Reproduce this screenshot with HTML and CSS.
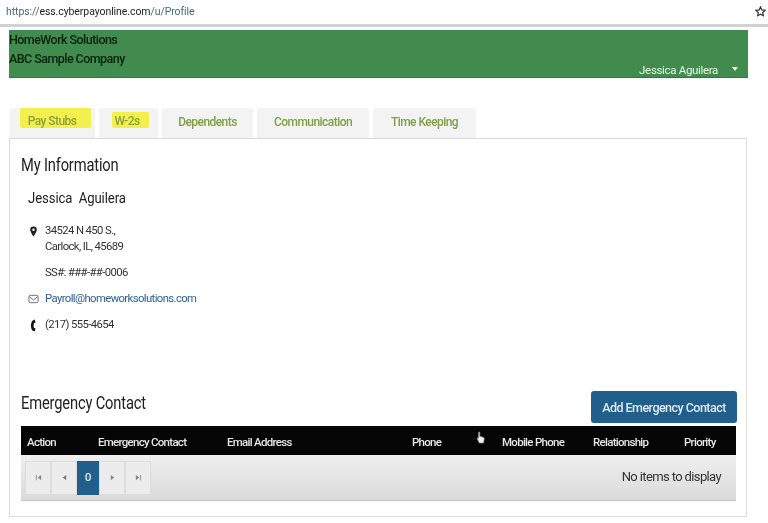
FILE: index.html
```html
<!DOCTYPE html>
<html lang="en">
<head>
<meta charset="utf-8">
<title>Profile</title>
<link rel="stylesheet" href="styles.css">
</head>
<body>
<div class="page">
  <div class="urlbar">
    <span class="url">https://<b>ess.cyberpayonline.com</b>/u/Profile</span>
    <svg class="star" viewBox="0 0 12 12" width="11" height="11"><path d="M6 1l1.500 3.300 3.500.4-2.600 2.400.7 3.500L6 8.900l-3.100 1.700.7-3.500L1 4.700l3.500-.4z" fill="none" stroke="#333" stroke-width="1.300"/></svg>
  </div>
  <header class="banner">
    <div class="org">HomeWork Solutions<br>ABC Sample Company</div>
    <div class="user">Jessica Aguilera<span class="caret"></span></div>
  </header>
  <nav class="tabs">
    <a class="tab tab-1"><mark>Pay Stubs</mark></a>
    <a class="tab tab-2"><mark>W-2s</mark></a>
    <a class="tab tab-3">Dependents</a>
    <a class="tab tab-4">Communication</a>
    <a class="tab tab-5">Time Keeping</a>
  </nav>
  <main class="panel">
    <h2 class="title">My Information</h2>
    <div class="name">Jessica&nbsp; Aguilera</div>
    <div class="row addr">
      <svg class="ico" viewBox="0 0 10 12" width="9" height="11"><path fill-rule="evenodd" d="M5 0.500a3.600 3.600 0 0 1 3.600 3.600C8.600 6.500 5 11.500 5 11.500S1.400 6.500 1.400 4.100A3.600 3.600 0 0 1 5 0.500zM5 2.800a1.300 1.300 0 1 0 0 2.600 1.300 1.300 0 0 0 0-2.600z" fill="#222"/></svg>
      <span>34524 N 450 S.,<br>Carlock, IL, 45689</span>
    </div>
    <div class="row ss"><span>SS#: ###-##-0006</span></div>
    <div class="row mail">
      <svg class="ico" viewBox="0 0 12 10" width="11" height="10"><rect x="1" y="1" width="10" height="8" rx="1.500" fill="none" stroke="#667" stroke-width="1"/><path d="M1.500 2.500L6 6l4.500-3.500" fill="none" stroke="#667" stroke-width="1"/></svg>
      <a class="link">Payroll@homeworksolutions.com</a>
    </div>
    <div class="row phone">
      <svg class="ico ico-phone" viewBox="0 0 8 12" width="8" height="13"><path d="M5 0.500L3 1.500C1.200 3.500 1.200 8.500 3 10.500L5 11.500L6 8.800L4.500 8.200C4 7 4 5 4.500 3.800L6 3.200z" fill="#111"/></svg>
      <span>(217) 555-4654</span>
    </div>
    <div class="section-head">
      <h2 class="title">Emergency Contact</h2>
      <button class="add">Add Emergency Contact</button>
    </div>
    <div class="grid-head">
      <span>Action</span><span>Emergency Contact</span><span>Email Address</span><span>Phone</span><span>Mobile Phone</span><span>Relationship</span><span>Priority</span>
    </div>
    <div class="pager">
      <div class="pages">
        <span class="pg"><svg viewBox="0 0 8 8" width="7" height="7"><path d="M1 1h1v6H1zM7 1v6L3 4z" fill="#888"/></svg></span>
        <span class="pg"><svg viewBox="0 0 8 8" width="7" height="7"><path d="M6 1v6L2 4z" fill="#777"/></svg></span>
        <span class="pg current">0</span>
        <span class="pg"><svg viewBox="0 0 8 8" width="7" height="7"><path d="M2 1v6l4-3z" fill="#888"/></svg></span>
        <span class="pg"><svg viewBox="0 0 8 8" width="7" height="7"><path d="M1 1v6l4-3zM6 1h1v6H6z" fill="#888"/></svg></span>
      </div>
      <span class="empty">No items to display</span>
    </div>
  </main>
  <svg class="cursor" viewBox="0 0 12 16" width="10" height="14"><path d="M3 1.500c0-1 1.500-1 1.500 0V6l4 1.200c1.500.5 1.500 1.500 1.200 3L9 14H4L1.500 9C1 8 2 7.500 3 8.500z" fill="#f4f4f4" stroke="#8a8a8a" stroke-width="1"/></svg>
</div>
</body>
</html>
```
FILE: styles.css
```css
* { box-sizing: border-box; }
html, body { margin: 0; background: #fff; }
body { font-family: Roboto, "Liberation Sans", sans-serif; color: #222; }
.page {
  position: relative;
  width: 768px;
  height: 523px;
  overflow: hidden;
  filter: blur(0.45px);
}
.urlbar {
  height: 27px;
  border-bottom: 3px solid #d2d2d2;
  display: flex;
  align-items: center;
  justify-content: space-between;
  padding: 0 2px 2px 6px;
  font-size: 10.500px;
  letter-spacing: -0.08px;
}
.url b { font-weight: 400; color: #1d1d1d; }
.url { color: #4b6b66; }
.banner {
  margin: 3px 20px 0 9px;
  height: 48px;
  background: #418b4f;
  border-bottom: 1px solid #35753f;
  display: flex;
  justify-content: space-between;
  font-size: 12.500px;
  color: #07210c;
}
.org { line-height: 19px; letter-spacing: -0.55px; font-weight: 500; }
.user {
  align-self: flex-end;
  color: #e9f4ea;
  font-size: 11.500px;
  line-height: 16px;
  letter-spacing: -0.33px;
  margin-bottom: -1px;
  display: flex;
  align-items: center;
}
.caret {
  width: 0;
  height: 0;
  margin: 0 10px 2px 14px;
  border-left: 3.500px solid transparent;
  border-right: 3.500px solid transparent;
  border-top: 4px solid #eef6ee;
}
.tabs {
  display: flex;
  margin: 30px 0 0 10px;
  height: 30px;
  gap: 4px;
}
.tab {
  display: flex;
  align-items: center;
  justify-content: center;
  padding-bottom: 2px;
  background: #f3f3f3;
  border-radius: 3px 3px 0 0;
  color: #7f9f45;
  font-size: 12px;
  font-weight: 500;
  letter-spacing: -0.55px;
}
.tab-1 { width: 85px; }
.tab-2 { width: 59px; }
.tab-3 { width: 91px; }
.tab-4 { width: 112px; }
.tab-5 { width: 103px; }
.tab mark {
  display: block;
  align-self: flex-start;
  margin: 0 0 0 6px;
  padding: 7px 15px 0 8px;
  background: #f3f04d;
  color: #87a33f;
  border-radius: 2px;
  line-height: 13px;
}
.tab-2 mark { margin: 4px 0 0 4px; padding: 3px 9px 0 2px; }
.panel {
  margin: 0 21px 0 9px;
  height: 379px;
  border: 1px solid #dcdcdc;
  padding: 15px 10px 0 11px;
}
.title {
  margin: 0;
  font-size: 17.500px;
  line-height: 22px;
  font-weight: 400;
  color: #222;
  letter-spacing: -0.2px;
  transform: scaleX(0.84);
  transform-origin: left center;
}
.name {
  margin: 11px 0 0 7px;
  font-size: 15px;
  line-height: 22px;
  letter-spacing: -0.1px;
  transform: scaleX(0.875);
  transform-origin: left center;
}
.row {
  display: flex;
  align-items: flex-start;
  margin-left: 7px;
  font-size: 11.300px;
  line-height: 16px;
  letter-spacing: -0.6px;
  color: #333;
}
.ico { flex: none; width: 11px; margin: 3px 6px 0 0; }
.ico-phone { height: 13px; margin-top: 2px; }
.addr { margin-top: 14px; }
.ss { margin-top: 10px; padding-left: 17px; }
.mail { margin-top: 10px; }
.phone { margin-top: 10px; }
.link { color: #2f5f8f; }
.section-head {
  display: flex;
  justify-content: space-between;
  align-items: flex-start;
  margin-top: 58px;
  height: 35px;
}
.section-head .title { padding-top: 1px; }
.add {
  width: 146px;
  height: 32px;
  margin: 0 -1px 0 0;
  background: #205f8c;
  color: #dfe9f0;
  border: 0;
  border-radius: 3px;
  font: 500 12.500px Roboto, "Liberation Sans", sans-serif;
  letter-spacing: -0.53px;
  padding: 0;
}
.grid-head {
  display: grid;
  grid-template-columns: 71px 129px 185px 90px 91px 91px 1fr;
  align-items: center;
  height: 29px;
  padding: 2px 0 0 6px;
  background: #050505;
  color: #e6e6e6;
  font-size: 11.500px;
  font-weight: 500;
  letter-spacing: -0.72px;
}
.pager {
  display: flex;
  align-items: center;
  justify-content: space-between;
  height: 46px;
  padding: 0 15px 0 4px;
  background: linear-gradient(#efefef, #dadada);
  border-bottom: 1px solid #c4c4c4;
}
.pages { display: flex; }
.pg {
  width: 26px;
  height: 34px;
  display: flex;
  align-items: center;
  justify-content: center;
  background: #ececec;
  border: 1px solid #dddddd;
}
.current {
  width: 22px;
  padding-bottom: 2px;
  background: #205f8c;
  border-color: #205f8c;
  color: #d8e6ef;
  font-size: 11.500px;
  font-weight: 500;
}
.empty {
  padding-bottom: 3px;
  font-size: 13px;
  letter-spacing: -0.62px;
  color: #333;
}
.cursor { position: absolute; left: 476px; top: 431px; }
```
